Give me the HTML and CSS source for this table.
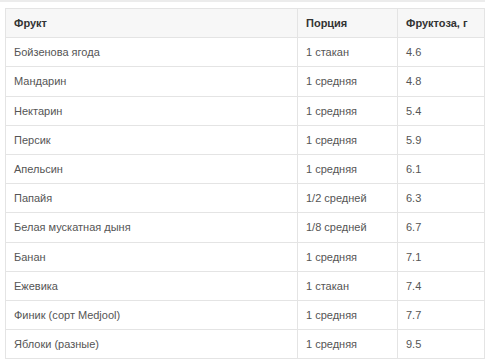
FILE: index.html
```html
<!DOCTYPE html>
<html lang="ru">
<head>
<meta charset="utf-8">
<link rel="stylesheet" href="styles.css">
</head>
<body>
<div class="topbar"></div>
<table class="fruit">
  <thead>
    <tr><th class="c1">Фрукт</th><th class="c2">Порция</th><th class="c3">Фруктоза, г</th></tr>
  </thead>
  <tbody>
    <tr><td>Бойзенова ягода</td><td>1 стакан</td><td>4.6</td></tr>
    <tr><td>Мандарин</td><td>1 средняя</td><td>4.8</td></tr>
    <tr><td>Нектарин</td><td>1 средняя</td><td>5.4</td></tr>
    <tr><td>Персик</td><td>1 средняя</td><td>5.9</td></tr>
    <tr><td>Апельсин</td><td>1 средняя</td><td>6.1</td></tr>
    <tr><td>Папайя</td><td>1/2 средней</td><td>6.3</td></tr>
    <tr><td>Белая мускатная дыня</td><td>1/8 средней</td><td>6.7</td></tr>
    <tr><td>Банан</td><td>1 средняя</td><td>7.1</td></tr>
    <tr><td>Ежевика</td><td>1 стакан</td><td>7.4</td></tr>
    <tr><td>Финик (сорт Medjool)</td><td>1 средняя</td><td>7.7</td></tr>
    <tr><td>Яблоки (разные)</td><td>1 средняя</td><td>9.5</td></tr>
  </tbody>
</table>
</body>
</html>
```
FILE: styles.css
```css
html, body {
  margin: 0;
  padding: 0;
  background: #fff;
}
body {
  font-family: "Liberation Sans", Arial, sans-serif;
  font-size: 11px;
  color: #555;
}
.topbar {
  height: 2px;
  background: #ececec;
  margin-bottom: 6px;
}
.fruit {
  margin-left: 5px;
  width: 479px;
  border-collapse: collapse;
  table-layout: fixed;
}
.fruit th, .fruit td {
  border: 1px solid #e4e4e4;
  height: 29.2px;
  padding: 0 8px;
  text-align: left;
  vertical-align: middle;
  box-sizing: border-box;
}
.fruit th {
  background: #f7f7f7;
  color: #333;
  font-weight: bold;
}
.c1 { width: 292px; }
.c2 { width: 100px; }
.c3 { width: 87px; }
```
